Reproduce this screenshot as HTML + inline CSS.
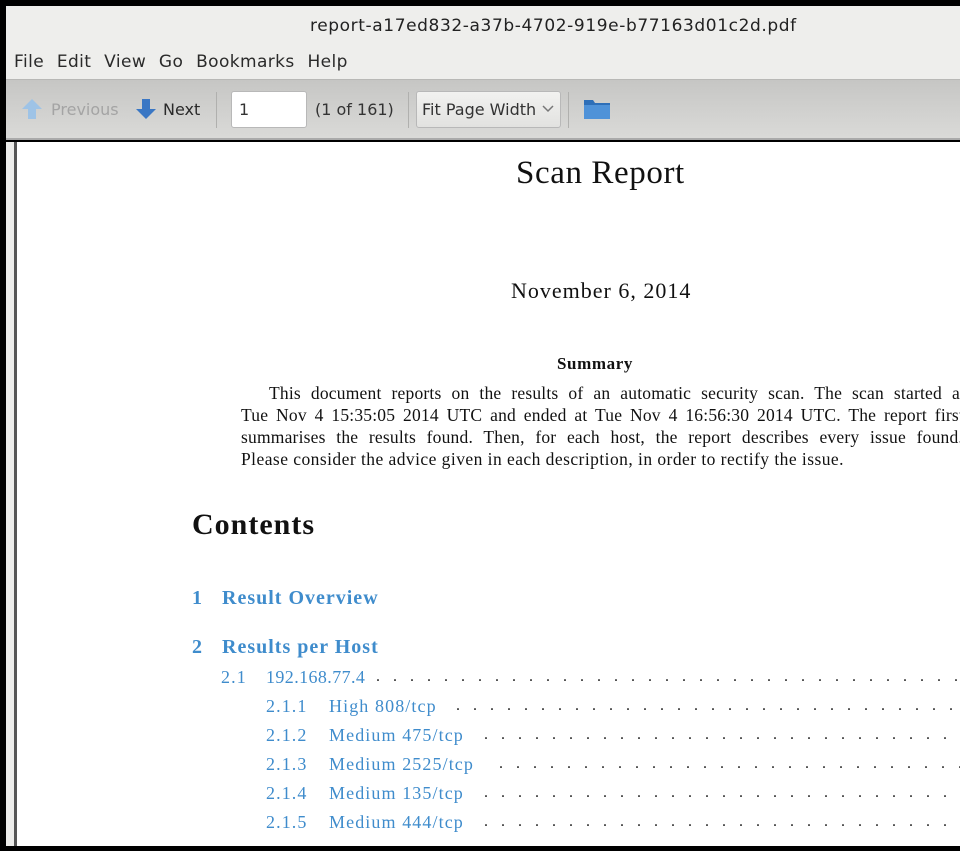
<!DOCTYPE html>
<html><head><meta charset="utf-8"><style>
*{margin:0;padding:0;box-sizing:border-box}
body{width:960px;height:851px;overflow:hidden;background:#000;position:relative;font-family:"DejaVu Sans","Liberation Sans",sans-serif}
.a{position:absolute;white-space:nowrap}
.s{font-family:"Liberation Serif",serif;color:#111}
.b{color:#3f8ccc}
.t{font-size:18px;letter-spacing:1.1px}
.j{text-align:justify;text-align-last:justify;font-size:17.5px;letter-spacing:0.2px}
.dots{position:absolute;white-space:nowrap;overflow:hidden;font-family:"Liberation Serif",serif;color:#222;font-size:16px;letter-spacing:4.5px}
</style></head><body>
<div class="a" style="left:6px;top:6px;width:954px;height:73px;background:#eeeeec"></div>
<div class="a" style="left:310px;top:16px;font-size:17px;letter-spacing:0.6px;color:#222">report-a17ed832-a37b-4702-919e-b77163d01c2d.pdf</div>
<div class="a" style="left:14px;top:52px;font-size:17px;letter-spacing:0.4px;color:#2a2a2a;word-spacing:7px">File Edit View Go Bookmarks Help</div>
<div class="a" style="left:6px;top:79px;width:954px;height:61px;background:linear-gradient(#c6c6c4,#dadad8);border-top:1px solid #b8b8b6;border-bottom:2px solid #aaa"></div>
<svg class="a" style="left:20px;top:97px" width="24" height="24" viewBox="0 0 24 24"><path d="M12 2 L22 12 H16 V22 H8 V12 H2 Z" fill="#9ec3e6"/></svg>
<div class="a" style="left:51px;top:100px;font-size:16px;color:#a4a4a4">Previous</div>
<svg class="a" style="left:134px;top:97px" width="24" height="24" viewBox="0 0 24 24"><path d="M12 22 L22 12 H16 V2 H8 V12 H2 Z" fill="#3a77c4"/></svg>
<div class="a" style="left:163px;top:100px;font-size:16px;color:#2a2a2a">Next</div>
<div class="a" style="left:216px;top:92px;width:1px;height:36px;background:#b0b0ae"></div>
<div class="a" style="left:231px;top:91px;width:76px;height:37px;background:#fff;border:1px solid #b8b8b8;border-radius:3px"></div>
<div class="a" style="left:239px;top:100px;font-size:16px;color:#333">1</div>
<div class="a" style="left:315px;top:100px;font-size:16px;color:#333">(1 of 161)</div>
<div class="a" style="left:408px;top:92px;width:1px;height:36px;background:#b0b0ae"></div>
<div class="a" style="left:416px;top:91px;width:145px;height:37px;background:linear-gradient(#f2f2f0,#e2e2e0);border:1px solid #b8b8b8;border-radius:3px"></div>
<div class="a" style="left:422px;top:100px;font-size:16px;color:#333">Fit Page Width</div>
<svg class="a" style="left:542px;top:104px" width="12" height="10"><path d="M1 2 L6 7 L11 2" stroke="#777" stroke-width="1.5" fill="none"/></svg>
<div class="a" style="left:568px;top:92px;width:1px;height:36px;background:#b0b0ae"></div>
<svg class="a" style="left:583px;top:97px" width="28" height="24" viewBox="0 0 28 24"><path d="M1 3 H10 L12 6 H27 V22 H1 Z" fill="#2e6fb8"/><rect x="1" y="8" width="26" height="14" fill="#4f92d8"/></svg>
<div class="a" style="left:6px;top:142px;width:9px;height:704px;background:#ececea"></div>
<div class="a" style="left:14px;top:142px;width:3px;height:704px;background:#555"></div>
<div class="a" style="left:17px;top:142px;width:943px;height:704px;background:#fff"></div>
<div class="a s" style="left:516px;top:155px;font-size:33px;letter-spacing:0.6px">Scan Report</div>
<div class="a s" style="left:511px;top:278px;font-size:22px;letter-spacing:1px">November 6, 2014</div>
<div class="a s" style="left:557px;top:354px;font-size:17px;letter-spacing:0.6px;font-weight:bold">Summary</div>
<div class="a s j" style="left:269px;top:383px;width:696px">This document reports on the results of an automatic security scan. The scan started at</div>
<div class="a s j" style="left:241px;top:405px;width:723px">Tue Nov 4 15:35:05 2014 UTC and ended at Tue Nov 4 16:56:30 2014 UTC. The report first</div>
<div class="a s j" style="left:241px;top:427px;width:722px">summarises the results found. Then, for each host, the report describes every issue found.</div>
<div class="a s" style="left:241px;top:449px;font-size:17.5px;letter-spacing:0.45px">Please consider the advice given in each description, in order to rectify the issue.</div>
<div class="a s" style="left:192px;top:508px;font-size:30px;letter-spacing:1px;font-weight:bold">Contents</div>
<div class="a s b" style="left:192px;top:587px;font-size:20px;font-weight:bold">1</div>
<div class="a s b" style="left:222px;top:587px;font-size:20px;letter-spacing:1px;font-weight:bold">Result Overview</div>
<div class="a s b" style="left:192px;top:636px;font-size:20px;font-weight:bold">2</div>
<div class="a s b" style="left:222px;top:636px;font-size:20px;letter-spacing:1px;font-weight:bold">Results per Host</div>
<div class="a s b t" style="left:221px;top:667px">2.1</div>
<div class="a s b t" style="left:266px;top:667px;letter-spacing:0.4px">192.168.77.4</div>
<div class="dots" style="left:376px;top:668px;width:584px">. . . . . . . . . . . . . . . . . . . . . . . . . . . . . . . . . . . . . . . . . . . . . . . . . . . .</div>
<div class="a s b t" style="left:266px;top:696px">2.1.1</div><div class="a s b t" style="left:329px;top:696px">High 808/tcp</div>
<div class="dots" style="left:456px;top:697px;width:504px">. . . . . . . . . . . . . . . . . . . . . . . . . . . . . . . . . . . . . . . . . . . .</div>
<div class="a s b t" style="left:266px;top:725px">2.1.2</div><div class="a s b t" style="left:329px;top:725px">Medium 475/tcp</div>
<div class="dots" style="left:484px;top:726px;width:476px">. . . . . . . . . . . . . . . . . . . . . . . . . . . . . . . . . . . . . . . . .</div>
<div class="a s b t" style="left:266px;top:754px">2.1.3</div><div class="a s b t" style="left:329px;top:754px">Medium 2525/tcp</div>
<div class="dots" style="left:499px;top:755px;width:461px">. . . . . . . . . . . . . . . . . . . . . . . . . . . . . . . . . . . . . . . .</div>
<div class="a s b t" style="left:266px;top:783px">2.1.4</div><div class="a s b t" style="left:329px;top:783px">Medium 135/tcp</div>
<div class="dots" style="left:484px;top:784px;width:476px">. . . . . . . . . . . . . . . . . . . . . . . . . . . . . . . . . . . . . . . . .</div>
<div class="a s b t" style="left:266px;top:812px">2.1.5</div><div class="a s b t" style="left:329px;top:812px">Medium 444/tcp</div>
<div class="dots" style="left:484px;top:813px;width:476px">. . . . . . . . . . . . . . . . . . . . . . . . . . . . . . . . . . . . . . . . .</div>
</body></html>
